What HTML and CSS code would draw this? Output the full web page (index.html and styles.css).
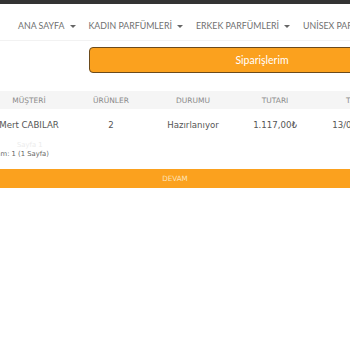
FILE: index.html
```html
<!DOCTYPE html>
<html lang="tr">
<head>
    <meta charset="UTF-8">
    <meta name="viewport" content="width=device-width, initial-scale=1.0">
    <title>Siparişlerim</title>
    <link rel="stylesheet" href="styles.css">
</head>
<body>
    <!-- Top strip -->
    <div class="topbar"></div>

    <!-- Main menu -->
    <nav class="menu">
        <a href="#">ANA SAYFA <span class="caret"></span></a>
        <a href="#">KADIN PARFÜMLERİ <span class="caret"></span></a>
        <a href="#">ERKEK PARFÜMLERİ <span class="caret"></span></a>
        <a href="#">UNİSEX PARFÜMLER <span class="caret"></span></a>
    </nav>

    <div class="page">
        <div class="title-btn">Siparişlerim</div>

        <!-- Orders table -->
        <table class="orders">
            <thead>
                <tr>
                    <th>MÜŞTERİ</th>
                    <th>ÜRÜNLER</th>
                    <th>DURUMU</th>
                    <th>TUTARI</th>
                    <th>TARİH</th>
                </tr>
            </thead>
            <tbody>
                <tr>
                    <td>Mert CABILAR</td>
                    <td>2</td>
                    <td>Hazırlanıyor</td>
                    <td>1.117,00₺</td>
                    <td>13/04/2019</td>
                </tr>
            </tbody>
        </table>

        <div class="pager">
            <div class="pager-faint">Sayfa 1</div>
            <div class="pager-info">Toplam: 1 (1 Sayfa)</div>
        </div>

        <button class="continue">DEVAM</button>
    </div>
</body>
</html>
```

FILE: styles.css
```css
/* General body styling */
body {
    margin: 0;
    background-color: #fff;
    font-family: Lato, "Open Sans", sans-serif;
    overflow: hidden;
}

/* Dark strip on top */
.topbar {
    height: 4px;
    background-color: #333;
}

/* Menu */
.menu {
    display: flex;
    gap: 13px;
    padding: 15px 0 0 18px;
    height: 21px;
    border-bottom: 1px solid #f2f2f2;
    white-space: nowrap;
}

.menu a {
    color: #6f6f6f;
    font-family: Lato, sans-serif;
    font-size: 8.8px;
    letter-spacing: 0;
    text-decoration: none;
    display: flex;
    align-items: center;
    gap: 5px;
    height: 13px;
}

.caret {
    display: inline-block;
    width: 0;
    height: 0;
    border-top: 3px solid #666;
    border-left: 3px solid transparent;
    border-right: 3px solid transparent;
    margin-top: 2px;
}

/* Page content */
.page {
    padding-top: 6px;
}

.title-btn {
    margin-left: 89px;
    width: 344px;
    height: 24px;
    line-height: 24px;
    text-align: center;
    color: #fff;
    font-family: Lato, sans-serif;
    font-size: 10.5px;
    background-color: #fba11e;
    border: 1px solid #6b4a1c;
    border-radius: 4px;
}

/* Orders table */
.orders {
    margin: 18px 0 0 -12px;
    border-collapse: collapse;
    table-layout: fixed;
    width: 410px;
}

.orders th {
    width: 82px;
    height: 18px;
    padding: 0;
    background-color: #f5f5f5;
    color: #8a8a8a;
    font-family: "DejaVu Sans", sans-serif;
    font-size: 7.5px;
    font-weight: normal;
    text-align: center;
}

.orders td {
    height: 32px;
    padding: 0;
    color: #555;
    font-family: "DejaVu Sans", sans-serif;
    font-size: 8.6px;
    text-align: center;
    white-space: nowrap;
}

/* Pagination info */
.pager {
    margin-left: -17px;
    font-family: "DejaVu Sans", sans-serif;
    font-size: 6.8px;
}

.pager-faint {
    color: #ececec;
    margin-left: 34px;
    height: 9px;
}

.pager-info {
    color: #666;
}

/* Continue button */
.continue {
    display: block;
    width: 100%;
    margin-top: 11px;
    height: 19px;
    border: none;
    background-color: #fba11e;
    color: #fde2b8;
    font-family: "DejaVu Sans", sans-serif;
    font-size: 7.2px;
    box-shadow: 0 2px 0 #ececec;
}
```
